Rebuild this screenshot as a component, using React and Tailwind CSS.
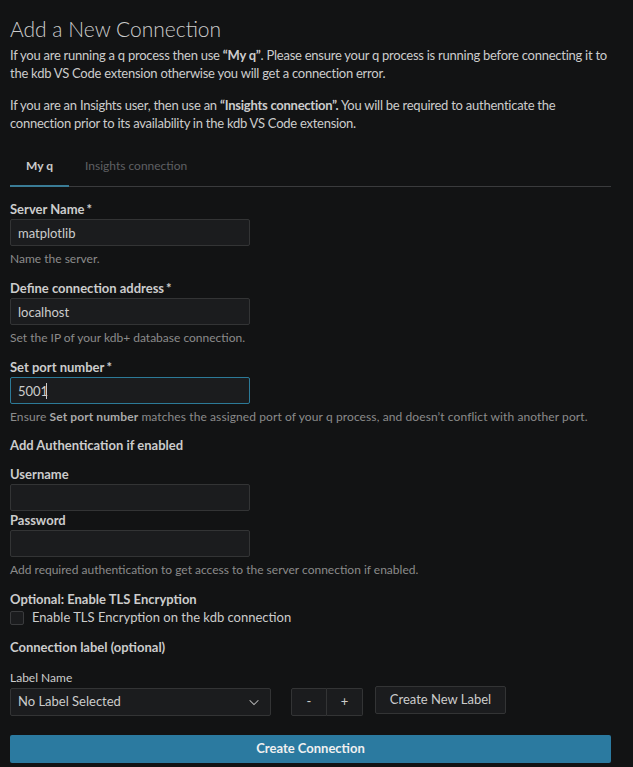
import { useState } from "react";

const font = { fontFamily: '"Lato", "Noto Sans", sans-serif' };

function Label({ children, required }) {
  return (
    <div className="text-[13px] font-bold text-[#cccccc] leading-[18px] mb-[1px]">
      {children}
      {required && <span className="ml-[2px]">*</span>}
    </div>
  );
}

function TextInput({ value, onChange, focused }) {
  return (
    <div className="relative w-[240px]">
      <input
        value={value}
        onChange={(e) => onChange(e.target.value)}
        className={`block w-[240px] h-[27px] px-[7px] bg-[#1b1c1e] text-[13px] text-[#cccccc] rounded-[2px] border outline-none ${
          focused ? "border-[#2c7a98]" : "border-[#333435]"
        }`}
      />
      {/* text caret of the active field */}
      {focused && <span className="absolute left-[36px] top-[6px] w-px h-[16px] bg-[#cccccc]" />}
    </div>
  );
}

function Hint({ children }) {
  return <div className="text-[12px] text-[#8b8b8b] leading-[16px] mt-[5px]">{children}</div>;
}

export default function App() {
  const [serverName, setServerName] = useState("matplotlib");
  const [address, setAddress] = useState("localhost");
  const [port, setPort] = useState("5001");
  const [username, setUsername] = useState("");
  const [password, setPassword] = useState("");
  const [tls, setTls] = useState(false);

  return (
    <div className="min-h-[767px] bg-[#121314] text-[#cccccc] px-[10px] pt-[16px]" style={font}>
      <h1 className="text-[21px] font-light text-[#cccccc] leading-[26px]">Add a New Connection</h1>
      <div className="text-[13px] leading-[18px] tracking-[-0.25px] text-[#cccccc] whitespace-nowrap">
        <p className="mt-[4px]">
          If you are running a q process then use <b>“My q”</b>. Please ensure your q process is running before connecting it to
          <br />
          the kdb VS Code extension otherwise you will get a connection error.
        </p>
        <p className="mt-[14px]">
          If you are an Insights user, then use an <b>“Insights connection”.</b> You will be required to authenticate the
          <br />
          connection prior to its availability in the kdb VS Code extension.
        </p>
      </div>

      {/* tabs */}
      <div className="mt-[24px] flex border-b border-[#3a3b3d] w-[601px]">
        <div className="w-[59px] h-[31px] flex items-start justify-center pt-[1px] text-[12px] font-bold text-[#cccccc] border-b-2 border-[#3a7c96] -mb-px">
          My q
        </div>
        <div className="px-[16px] pt-[1px] text-[12px] text-[#5f6063]">Insights connection</div>
      </div>

      <div className="mt-[13px]">
        <Label required>Server Name</Label>
        <TextInput value={serverName} onChange={setServerName} />
        <Hint>Name the server.</Hint>
      </div>

      <div className="mt-[12px]">
        <Label required>Define connection address</Label>
        <TextInput value={address} onChange={setAddress} />
        <Hint>Set the IP of your kdb+ database connection.</Hint>
      </div>

      <div className="mt-[12px]">
        <Label required>Set port number</Label>
        <TextInput value={port} onChange={setPort} focused />
        <Hint>
          <span className="tracking-[0.1px]">
            Ensure <b className="text-[#a9a9a9]">Set port number</b> matches the assigned port of your q process, and doesn’t conflict with another port.
          </span>
        </Hint>
      </div>

      <div className="mt-[11px] text-[13px] font-bold leading-[18px]">Add Authentication if enabled</div>

      <div className="mt-[11px]">
        <Label>Username</Label>
        <TextInput value={username} onChange={setUsername} />
      </div>
      <div>
        <Label>Password</Label>
        <TextInput value={password} onChange={setPassword} />
        <Hint>Add required authentication to get access to the server connection if enabled.</Hint>
      </div>

      <div className="mt-[12px] text-[13px] font-bold leading-[18px]">Optional: Enable TLS Encryption</div>
      <label className="flex items-center gap-[8px] mt-[1px] h-[18px] text-[13px]">
        <button
          onClick={() => setTls(!tls)}
          className="w-[14px] h-[14px] rounded-[2px] bg-[#1b1c1e] border border-[#3a3b3d] flex items-center justify-center text-[10px]"
        >
          {tls ? "✓" : ""}
        </button>
        Enable TLS Encryption on the kdb connection
      </label>

      <div className="mt-[11px] text-[13px] font-bold leading-[18px]">Connection label (optional)</div>

      <div className="mt-[14px] text-[12px] leading-[16px]">Label Name</div>
      <div className="flex items-start mt-[2px]">
        <div className="w-[261px] h-[28px] bg-[#1b1c1e] border border-[#333435] rounded-[2px] flex items-center justify-between px-[7px] text-[13px]">
          <span>No Label Selected</span>
          <svg width="14" height="14" viewBox="0 0 16 16" fill="none" stroke="#bbbbbb" strokeWidth="1.2" className="mr-[2px]">
            <path d="M3 6l5 5 5-5" />
          </svg>
        </div>
        <div className="flex ml-[20px] h-[28px]">
          <button className="w-[36px] h-full bg-[#1b1c1e] border border-[#333435] rounded-l-[2px] text-[13px]">-</button>
          <button className="w-[36px] h-full bg-[#1b1c1e] border border-l-0 border-[#333435] rounded-r-[2px] text-[13px]">+</button>
        </div>
        <button className="ml-[12px] -mt-[2px] w-[131px] h-[28px] bg-[#1b1c1e] border border-[#333435] rounded-[2px] text-[13px] text-[#cccccc]">
          Create New Label
        </button>
      </div>

      <button className="mt-[19px] w-[601px] h-[28px] bg-[#2b7aa0] rounded-[2px] text-[13px] font-bold text-[#f0f0f0]">
        Create Connection
      </button>
    </div>
  );
}
